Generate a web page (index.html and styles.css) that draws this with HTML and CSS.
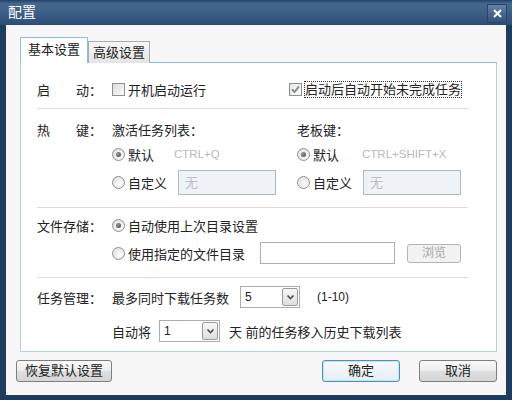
FILE: index.html
```html
<!doctype html>
<html>
<head>
  <meta charset="utf-8">
  <title>配置</title>
  <link rel="stylesheet" href="styles.css">
</head>
<body>
  <div class="window">
    <div class="titlebar">
      <span class="title">配置</span>
      <span class="close">
        <svg width="9" height="9" viewBox="0 0 9 9"><path d="M1 1L8 8M8 1L1 8" stroke="#fff" stroke-width="2"/></svg>
      </span>
    </div>

    <div class="dialog">
      <div class="tabs">
        <span class="tab active">基本设置</span>
        <span class="tab">高级设置</span>
      </div>

      <div class="panel">
        <div class="section start">
          <div class="row">
            <span class="label spread"><span>启</span><span>动：</span></span>
            <label class="check col-start"><span class="box"></span>开机启动运行</label>
            <label class="check"><span class="box checked"><svg width="11" height="11" viewBox="0 0 11 11"><path d="M2 5.5L4.5 8L9 2.5" fill="none" stroke="#7d8791" stroke-width="1.8"/></svg></span><span class="focus">启动后自动开始未完成任务</span></label>
          </div>
        </div>

        <div class="section hotkey">
          <div class="row">
            <span class="label spread"><span>热</span><span>键：</span></span>
            <span class="col">激活任务列表：</span>
            <span>老板键：</span>
          </div>
          <div class="row opt">
            <span class="indent"></span>
            <span class="col">
              <label class="radio"><span class="circle"><span class="dot"></span></span>默认</label>
              <span class="hint">CTRL+Q</span>
            </span>
            <label class="radio"><span class="circle"><span class="dot"></span></span>默认</label>
            <span class="hint">CTRL+SHIFT+X</span>
          </div>
          <div class="row custom">
            <span class="indent"></span>
            <span class="col">
              <label class="radio"><span class="circle"></span>自定义</label>
              <span class="textbox disabled">无</span>
            </span>
            <label class="radio"><span class="circle"></span>自定义</label>
            <span class="textbox disabled">无</span>
          </div>
        </div>

        <div class="section storage">
          <div class="row">
            <span class="label">文件存储：</span>
            <label class="radio"><span class="circle"><span class="dot"></span></span>自动使用上次目录设置</label>
          </div>
          <div class="row path">
            <span class="indent"></span>
            <label class="radio wide"><span class="circle"></span>使用指定的文件目录</label>
            <span class="textbox path-box"></span>
            <span class="button browse">浏览</span>
          </div>
        </div>

        <div class="section tasks">
          <div class="row">
            <span class="label">任务管理：</span>
            <span class="max-label">最多同时下载任务数</span>
            <span class="combo"><span class="value">5</span><span class="arrow"><svg width="11" height="10" viewBox="0 0 11 10"><path d="M2.5 3.5L5.5 6.5L8.5 3.5" fill="none" stroke="#4a4a4a" stroke-width="1.6"/></svg></span></span>
            <span class="range">(1-10)</span>
          </div>
          <div class="row history">
            <span class="indent"></span>
            <span class="auto-label">自动将</span>
            <span class="combo"><span class="value">1</span><span class="arrow"><svg width="11" height="10" viewBox="0 0 11 10"><path d="M2.5 3.5L5.5 6.5L8.5 3.5" fill="none" stroke="#4a4a4a" stroke-width="1.6"/></svg></span></span>
            <span class="days">天 前的任务移入历史下载列表</span>
          </div>
        </div>
      </div>

      <div class="footer">
        <span class="button reset">恢复默认设置</span>
        <span class="spacer"></span>
        <span class="button ok">确定</span>
        <span class="button cancel">取消</span>
      </div>
    </div>
  </div>
</body>
</html>
```

FILE: styles.css
```css
body {
  margin: 0;
  font-family: "Liberation Sans", "Noto Sans CJK SC", sans-serif;
  font-size: 13px;
  color: #222;
}
.window {
  width: 512px;
  height: 400px;
  background-color: #1f3b5e;
  overflow: hidden;
}
.titlebar {
  display: flex;
  align-items: center;
  height: 25px;
  padding: 0 5px 0 8px;
  background: linear-gradient(#22416a 0%, #47698f 15%, #3a5c84 60%, #2c4d76 100%);
}
.title {
  flex: 1;
  color: #fff;
  font-size: 14px;
  line-height: 25px;
}
.close {
  display: flex;
  align-items: center;
  justify-content: center;
  width: 18px;
  height: 17px;
  margin-top: 2px;
  border: 1px solid #2a4467;
  background: linear-gradient(#6683a6, #46658c 55%, #34547b);
}
.dialog {
  height: 370px;
  margin: 0 6px;
  padding: 13px 9px 0 14px;
  box-sizing: border-box;
  background-color: #f7f7f7;
}

/* tabs */
.tabs {
  display: flex;
  align-items: flex-end;
  height: 25px;
  margin-bottom: -1px;
}
.tab {
  height: 22px;
  padding: 0 4px;
  border: 1px solid #a5adb3;
  border-bottom: none;
  box-sizing: border-box;
  background: linear-gradient(#f7f7f7, #e4e4e4);
  line-height: 21px;
}
.tab.active {
  position: relative;
  z-index: 1;
  height: 26px;
  padding: 0 7px;
  border-color: #8dbfd4;
  background: #fff;
  line-height: 24px;
}

/* panel */
.panel {
  height: 290px;
  border: 1px solid #b3d0de;
  border-top-color: #86c0d6;
  box-sizing: border-box;
  background-color: #fff;
}
.section {
  margin: 0 28px 0 16px;
  border-bottom: 1px solid #dcdcdc;
}
.section.start {
  padding: 16px 0 9px;
}
.section.hotkey {
  padding: 10px 0 12px;
}
.section.storage {
  padding: 7px 0 13px;
}
.section.tasks {
  padding: 8px 0 0;
  border-bottom: none;
}
.row {
  display: flex;
  align-items: center;
  height: 20px;
  white-space: nowrap;
}
.row.opt {
  margin-top: 5px;
}
.row.custom {
  height: 25px;
  margin-top: 6px;
}
.row.path {
  height: 22px;
  margin-top: 7px;
}
.tasks .row {
  height: 22px;
}
.row.history {
  margin-top: 12px;
}
.label {
  width: 65px;
  margin-right: 10px;
}
.label.spread {
  display: flex;
  justify-content: space-between;
}
.indent {
  width: 75px;
}
.col,
.col-start {
  display: flex;
  align-items: center;
  width: 177px;
}
.hotkey .col {
  width: 185px;
}

/* check boxes and radios */
.check,
.radio {
  display: flex;
  align-items: center;
}
.box {
  display: flex;
  align-items: center;
  justify-content: center;
  width: 13px;
  height: 13px;
  margin-right: 3px;
  border: 1px solid #8e8f8f;
  box-sizing: border-box;
  background: linear-gradient(135deg, #dcdcdc, #fbfbfb);
}
.box.checked {
  background: linear-gradient(135deg, #e4e4e4, #fdfdfd);
}
.focus {
  outline: 1px dotted #333;
  outline-offset: 0;
  line-height: 15px;
}
.radio {
  width: 62px;
}
.radio.wide {
  width: 148px;
}
.storage .row:first-child .radio {
  width: auto;
}
.circle {
  display: flex;
  align-items: center;
  justify-content: center;
  width: 13px;
  height: 13px;
  margin-right: 3px;
  border: 1px solid #8e8f8f;
  border-radius: 50%;
  box-sizing: border-box;
  background: radial-gradient(circle at 65% 65%, #fdfdfd, #dadada);
}
.dot {
  width: 5px;
  height: 5px;
  border-radius: 50%;
  background: radial-gradient(circle at 35% 35%, #9a9a9a, #404040);
}
.hint {
  color: #b9b9b9;
  font-size: 11.5px;
}
.hotkey .row.opt > .hint {
  margin-left: 3px;
}

/* inputs */
.textbox {
  width: 98px;
  height: 25px;
  margin-left: 4px;
  padding-left: 6px;
  border: 1px solid #abadb3;
  box-sizing: border-box;
  background-color: #fff;
  line-height: 23px;
}
.textbox.disabled {
  background-color: #eef3f8;
  border-color: #b4b9be;
  color: #bdbdbd;
}
.textbox.path-box {
  width: 135px;
  height: 22px;
  margin-left: 0;
}
.combo {
  display: flex;
  align-items: center;
  width: 60px;
  height: 22px;
  padding: 1px;
  border: 1px solid #abadb3;
  box-sizing: border-box;
  background-color: #fff;
}
.combo .value {
  flex: 1;
  padding-left: 3px;
  font-size: 12px;
}
.combo .arrow {
  display: flex;
  align-items: center;
  justify-content: center;
  width: 16px;
  height: 18px;
  border: 1px solid #9b9b9b;
  border-radius: 2px;
  box-sizing: border-box;
  background: linear-gradient(#f7f7f7, #dedede);
}
.max-label {
  width: 128px;
}
.range {
  margin-left: 17px;
  font-size: 12px;
}
.auto-label {
  width: 38px;
  margin-right: 9px;
}
.history .combo {
  width: 61px;
}
.days {
  margin-left: 9px;
}

/* buttons */
.button {
  display: inline-block;
  height: 22px;
  border: 1px solid #7f7f7f;
  border-radius: 3px;
  box-sizing: border-box;
  background: linear-gradient(#f9f9f9, #ececec 50%, #dfdfdf 51%, #d6d6d6);
  line-height: 20px;
  text-align: center;
}
.button.browse {
  width: 54px;
  height: 19px;
  margin-left: 12px;
  border-color: #b1b5b8;
  background: #f2f2f2;
  color: #a8a8a8;
  font-size: 12px;
  line-height: 17px;
}
.footer {
  display: flex;
  margin: 8px 0 0 -4px;
}
.spacer {
  flex: 1;
}
.button.reset {
  width: 96px;
}
.button.ok,
.button.cancel {
  width: 78px;
}
.button.ok {
  margin-right: 19px;
  border-color: #4d8fc4;
  box-shadow: inset 0 0 0 1px #c6e4f7;
  background: linear-gradient(#f6fafd, #e4eef5);
}
```
